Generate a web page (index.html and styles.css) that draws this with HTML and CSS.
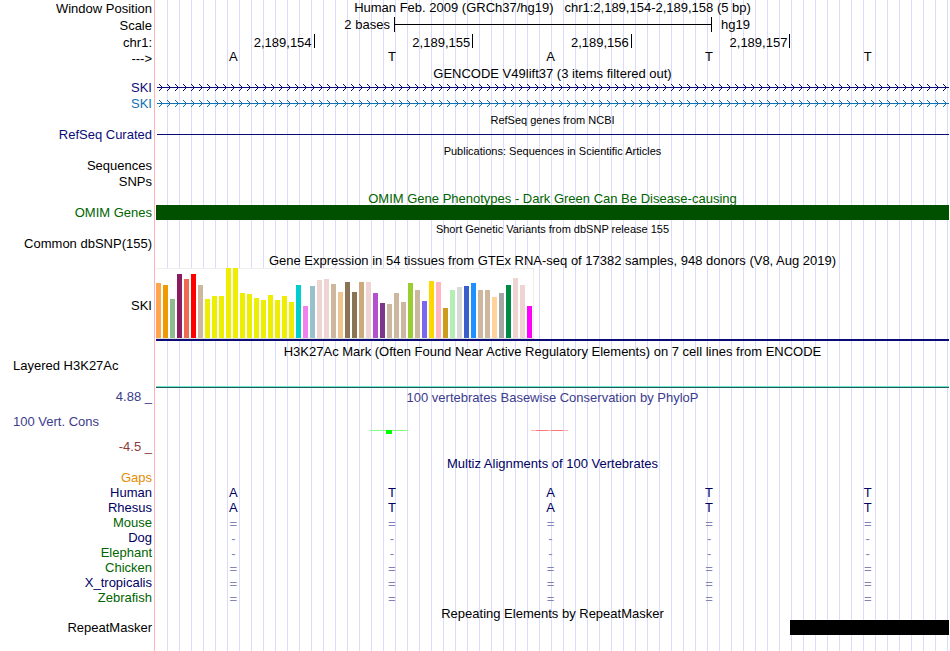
FILE: index.html
```html
<!DOCTYPE html>
<html lang="en">
<head>
<meta charset="utf-8">
<title>Genome Browser hg19 chr1:2,189,154-2,189,158</title>
<link rel="stylesheet" href="styles.css">
</head>
<body>
<main class="browser">
  <div class="row head"><div class="label">Window Position</div><h1 class="title">Human Feb. 2009 (GRCh37/hg19) &nbsp; chr1:2,189,154-2,189,158 (5 bp)</h1></div>
  <div class="row head"><div class="label">Scale</div><div class="scale"><span class="scale-left">2 bases</span><span class="scale-bar"></span><span class="scale-right">hg19</span></div></div>
  <div class="row head"><div class="label">chr1:</div><div class="ticks"><span>2,189,154</span><span>2,189,155</span><span>2,189,156</span><span>2,189,157</span></div></div>
  <div class="row bases-head"><div class="label">---&gt;</div><div class="bases"><span>A</span><span>T</span><span>A</span><span>T</span><span>T</span></div></div>

  <h2 class="title">GENCODE V49lift37 (3 items filtered out)</h2>
  <div class="row navy"><div class="label">SKI</div>
    <svg class="gene" aria-hidden="true"><defs><pattern id="arrow" x="0" y="0" width="8" height="16" patternUnits="userSpaceOnUse"><path d="M3 4h1v1h-1zM4 5h1v1h-1zM5 6h1v1h-1zM6 7h1v1h-1zM5 8h1v1h-1zM4 9h1v1h-1zM3 10h1v1h-1z" fill="#0c0c78"/></pattern></defs><rect x="1" width="100%" height="16" fill="url(#arrow)"/><rect x="1" y="7" width="100%" height="1" fill="#0c0c78"/></svg></div>
  <div class="row blue"><div class="label">SKI</div>
    <svg class="gene" aria-hidden="true"><defs><pattern id="arrow-blue" x="0" y="0" width="8" height="16" patternUnits="userSpaceOnUse"><path d="M3 4h1v1h-1zM4 5h1v1h-1zM5 6h1v1h-1zM6 7h1v1h-1zM5 8h1v1h-1zM4 9h1v1h-1zM3 10h1v1h-1z" fill="#1470b4"/></pattern></defs><rect x="1" width="100%" height="16" fill="url(#arrow-blue)"/><rect x="1" y="7" width="100%" height="1" fill="#1470b4"/></svg></div>

  <h2 class="title small">RefSeq genes from NCBI</h2>
  <div class="row navy"><div class="label">RefSeq Curated</div><div class="line"></div></div>

  <h2 class="title small">Publications: Sequences in Scientific Articles</h2>
  <div class="row"><div class="label">Sequences</div></div>
  <div class="row"><div class="label">SNPs</div></div>

  <h2 class="title green">OMIM Gene Phenotypes - Dark Green Can Be Disease-causing</h2>
  <div class="row green"><div class="label">OMIM Genes</div><div class="block omim"></div></div>

  <h2 class="title small">Short Genetic Variants from dbSNP release 155</h2>
  <div class="row"><div class="label">Common dbSNP(155)</div></div>

  <h2 class="title">Gene Expression in 54 tissues from GTEx RNA-seq of 17382 samples, 948 donors (V8, Aug 2019)</h2>
  <div class="row expression"><div class="label">SKI</div><div class="gtex"><div class="bars" id="bars"></div></div></div>

  <h2 class="title">H3K27Ac Mark (Often Found Near Active Regulatory Elements) on 7 cell lines from ENCODE</h2>
  <div class="row layered"><div class="label left">Layered H3K27Ac</div><div class="signal"></div></div>

  <section class="row conservation">
    <div class="levels"><div class="label indigo">4.88 _</div><div class="label left indigo">100 Vert. Cons</div><div class="label maroon">-4.5 _</div></div>
    <div>
      <h2 class="title indigo inner">100 vertebrates Basewise Conservation by PhyloP</h2>
      <svg class="wiggle" viewBox="0 0 793 8" preserveAspectRatio="none" aria-hidden="true"><path d="M214 2.500h38" stroke="#82ff82"/><rect x="230" y="2" width="6" height="4" fill="#00ff00"/><path d="M375 2.500h37" stroke="#ffb4b4"/><path d="M380 2.500h12M395 2.500h12" stroke="#ff7878"/></svg>
    </div>
  </section>

  <h2 class="title navy-dark">Multiz Alignments of 100 Vertebrates</h2>
  <div class="row align"><div class="label orange">Gaps</div></div>
  <div class="row align navy-dark"><div class="label">Human</div><div class="bases"><span>A</span><span>T</span><span>A</span><span>T</span><span>T</span></div></div>
  <div class="row align navy-dark"><div class="label">Rhesus</div><div class="bases"><span>A</span><span>T</span><span>A</span><span>T</span><span>T</span></div></div>
  <div class="row align green"><div class="label">Mouse</div><div class="bases gap"><span>=</span><span>=</span><span>=</span><span>=</span><span>=</span></div></div>
  <div class="row align navy-dark"><div class="label">Dog</div><div class="bases gap"><span>-</span><span>-</span><span>-</span><span>-</span><span>-</span></div></div>
  <div class="row align green"><div class="label">Elephant</div><div class="bases gap"><span>-</span><span>-</span><span>-</span><span>-</span><span>-</span></div></div>
  <div class="row align green"><div class="label">Chicken</div><div class="bases gap"><span>=</span><span>=</span><span>=</span><span>=</span><span>=</span></div></div>
  <div class="row align navy-dark"><div class="label">X_tropicalis</div><div class="bases gap"><span>=</span><span>=</span><span>=</span><span>=</span><span>=</span></div></div>
  <div class="row align green"><div class="label">Zebrafish</div><div class="bases gap"><span>=</span><span>=</span><span>=</span><span>=</span><span>=</span></div></div>

  <h2 class="title">Repeating Elements by RepeatMasker</h2>
  <div class="row"><div class="label">RepeatMasker</div><div class="block repeat"></div></div>
</main>
<script src="script.js"></script>
</body>
</html>
```
FILE: styles.css
```css
* { box-sizing: border-box; }

body {
  margin: 0;
  background: #fff;
  color: #000;
  font: 13px/16px "Liberation Sans", Arial, sans-serif;
}

.browser {
  min-height: 100vh;
  margin-right: 1px;
  background:
    linear-gradient(to right, #fff 154px, #ffb4b4 154px, #ffb4b4 155px, #fff 155px, #fff 156px, transparent 156px),
    repeating-linear-gradient(to right, #fff 0, #fff 11px, #dcdcfa 11px, #dcdcfa 12px);
}

.row {
  display: grid;
  grid-template-columns: 156px minmax(0, 1fr);
  height: 16px;
}

.row.head { height: 17px; }
.row.align { height: 15px; }
.row.bases-head { height: 14px; }
.head .label { padding-top: 1px; }

.label {
  padding-right: 4px;
  text-align: right;
  white-space: nowrap;
}

.label.left {
  padding-left: 13px;
  text-align: left;
}

.title {
  height: 15px;
  margin: 0 0 0 156px;
  font-size: 13px;
  font-weight: normal;
  line-height: 17px;
  text-align: center;
  white-space: nowrap;
}

.title.small { font-size: 11px; }
.row > .title, .title.inner { margin-left: 0; }
.row > h1.title { line-height: 16px; }

.navy { color: #0c0c78; }
.blue { color: #1470b4; }
.green { color: #006400; }
.indigo { color: #3c3c8c; }
.maroon { color: #8c3c3c; }
.orange { color: #e68c00; }
.navy-dark { color: #000064; }

.scale {
  display: grid;
  grid-template-columns: 3fr 4fr 3fr;
}

.scale-left {
  padding-right: 4px;
  text-align: right;
}

.scale-right { padding-left: 10px; }

.scale-bar {
  height: 15px;
  margin-right: -1px;
  border: solid #000;
  border-width: 0 1px;
  background: linear-gradient(#000, #000) 0 7px / 100% 1px no-repeat;
}

.ticks, .bases {
  display: grid;
  grid-template-columns: repeat(5, minmax(0, 1fr));
}

.ticks span {
  height: 14px;
  padding-right: 2px;
  border-right: 1px solid #000;
  line-height: 17px;
  text-align: right;
}

.bases {
  line-height: 15px;
  text-align: center;
}

.bases-head .bases { line-height: 12px; }
.bases-head .label { line-height: 15px; }
.bases span { padding-right: 4px; }

.bases.gap {
  color: #8282b4;
  line-height: 17px;
}

.gene {
  display: block;
  width: 100%;
  height: 16px;
}

.line {
  height: 1px;
  margin: 7px 0 0 1px;
  background: #0c0c78;
}

.block { height: 15px; }
.omim { background: #005000; }

.repeat {
  width: 20%;
  margin-left: auto;
  background: #000;
}

.row.expression {
  height: 76px;
  padding-top: 1px;
}

.expression .label { line-height: 76px; }

.gtex {
  height: 73px;
  border-bottom: 2px solid #0c0c78;
}

.bars {
  display: flex;
  align-items: flex-end;
  gap: 2px;
  width: 378px;
  height: 71px;
  border-bottom: 1px solid #dcdcdc;
  background: #fff;
  box-shadow: inset -1px 1px #eee;
}

.bars i { width: 5px; }

.row.layered { height: 31px; }

.signal {
  height: 30px;
  border-bottom: 1px solid #285a64;
  background: linear-gradient(#64e6c8, #64e6c8) 0 100% / 100% 1px no-repeat;
}

.row.conservation { height: 66px; }

.levels {
  display: flex;
  flex-direction: column;
  justify-content: space-between;
}

.wiggle {
  display: block;
  width: 100%;
  height: 8px;
  margin-top: 24px;
}
```
FILE: script.js
```js
// Median expression per tissue: [colour, bar height]
const tissues = [
  ["#ffa54f", 55], ["#ee9a00", 53], ["#8fbc8f", 39], ["#8b1c62", 64], ["#ee6a50", 59], ["#ff0000", 64],
  ["#cdb79e", 53], ["#eeee00", 39], ["#eeee00", 42], ["#eeee00", 42], ["#eeee00", 70], ["#eeee00", 70],
  ["#eeee00", 45], ["#eeee00", 44], ["#eeee00", 40], ["#eeee00", 38], ["#eeee00", 43], ["#eeee00", 38],
  ["#eeee00", 42], ["#eeee00", 36], ["#00cdcd", 53], ["#ee82ee", 32], ["#9ac0cd", 52], ["#eed5d2", 58],
  ["#eed5d2", 59], ["#cdb79e", 54], ["#eec591", 46], ["#8b7355", 56], ["#8b7355", 46], ["#cdaa7d", 56],
  ["#eed5d2", 56], ["#b452cd", 45], ["#7a378b", 35], ["#cdb79e", 34], ["#cdb79e", 45], ["#cdb79e", 36],
  ["#9acd32", 55], ["#cdb79e", 48], ["#7a67ee", 37], ["#ffd700", 57], ["#ffb6c1", 56], ["#cd9b1d", 30],
  ["#b4eeb4", 48], ["#d9d9d9", 51], ["#3a5fcd", 52], ["#1e90ff", 55], ["#cdb79e", 48], ["#cdb79e", 48],
  ["#ffd39b", 41], ["#a6a6a6", 45], ["#008b45", 53], ["#eed5d2", 60], ["#eed5d2", 53], ["#ff00ff", 32]
];

const bars = document.getElementById("bars");
for (const [colour, height] of tissues) {
  const bar = document.createElement("i");
  bar.style.height = height + "px";
  bar.style.background = colour;
  bars.append(bar);
}
```
